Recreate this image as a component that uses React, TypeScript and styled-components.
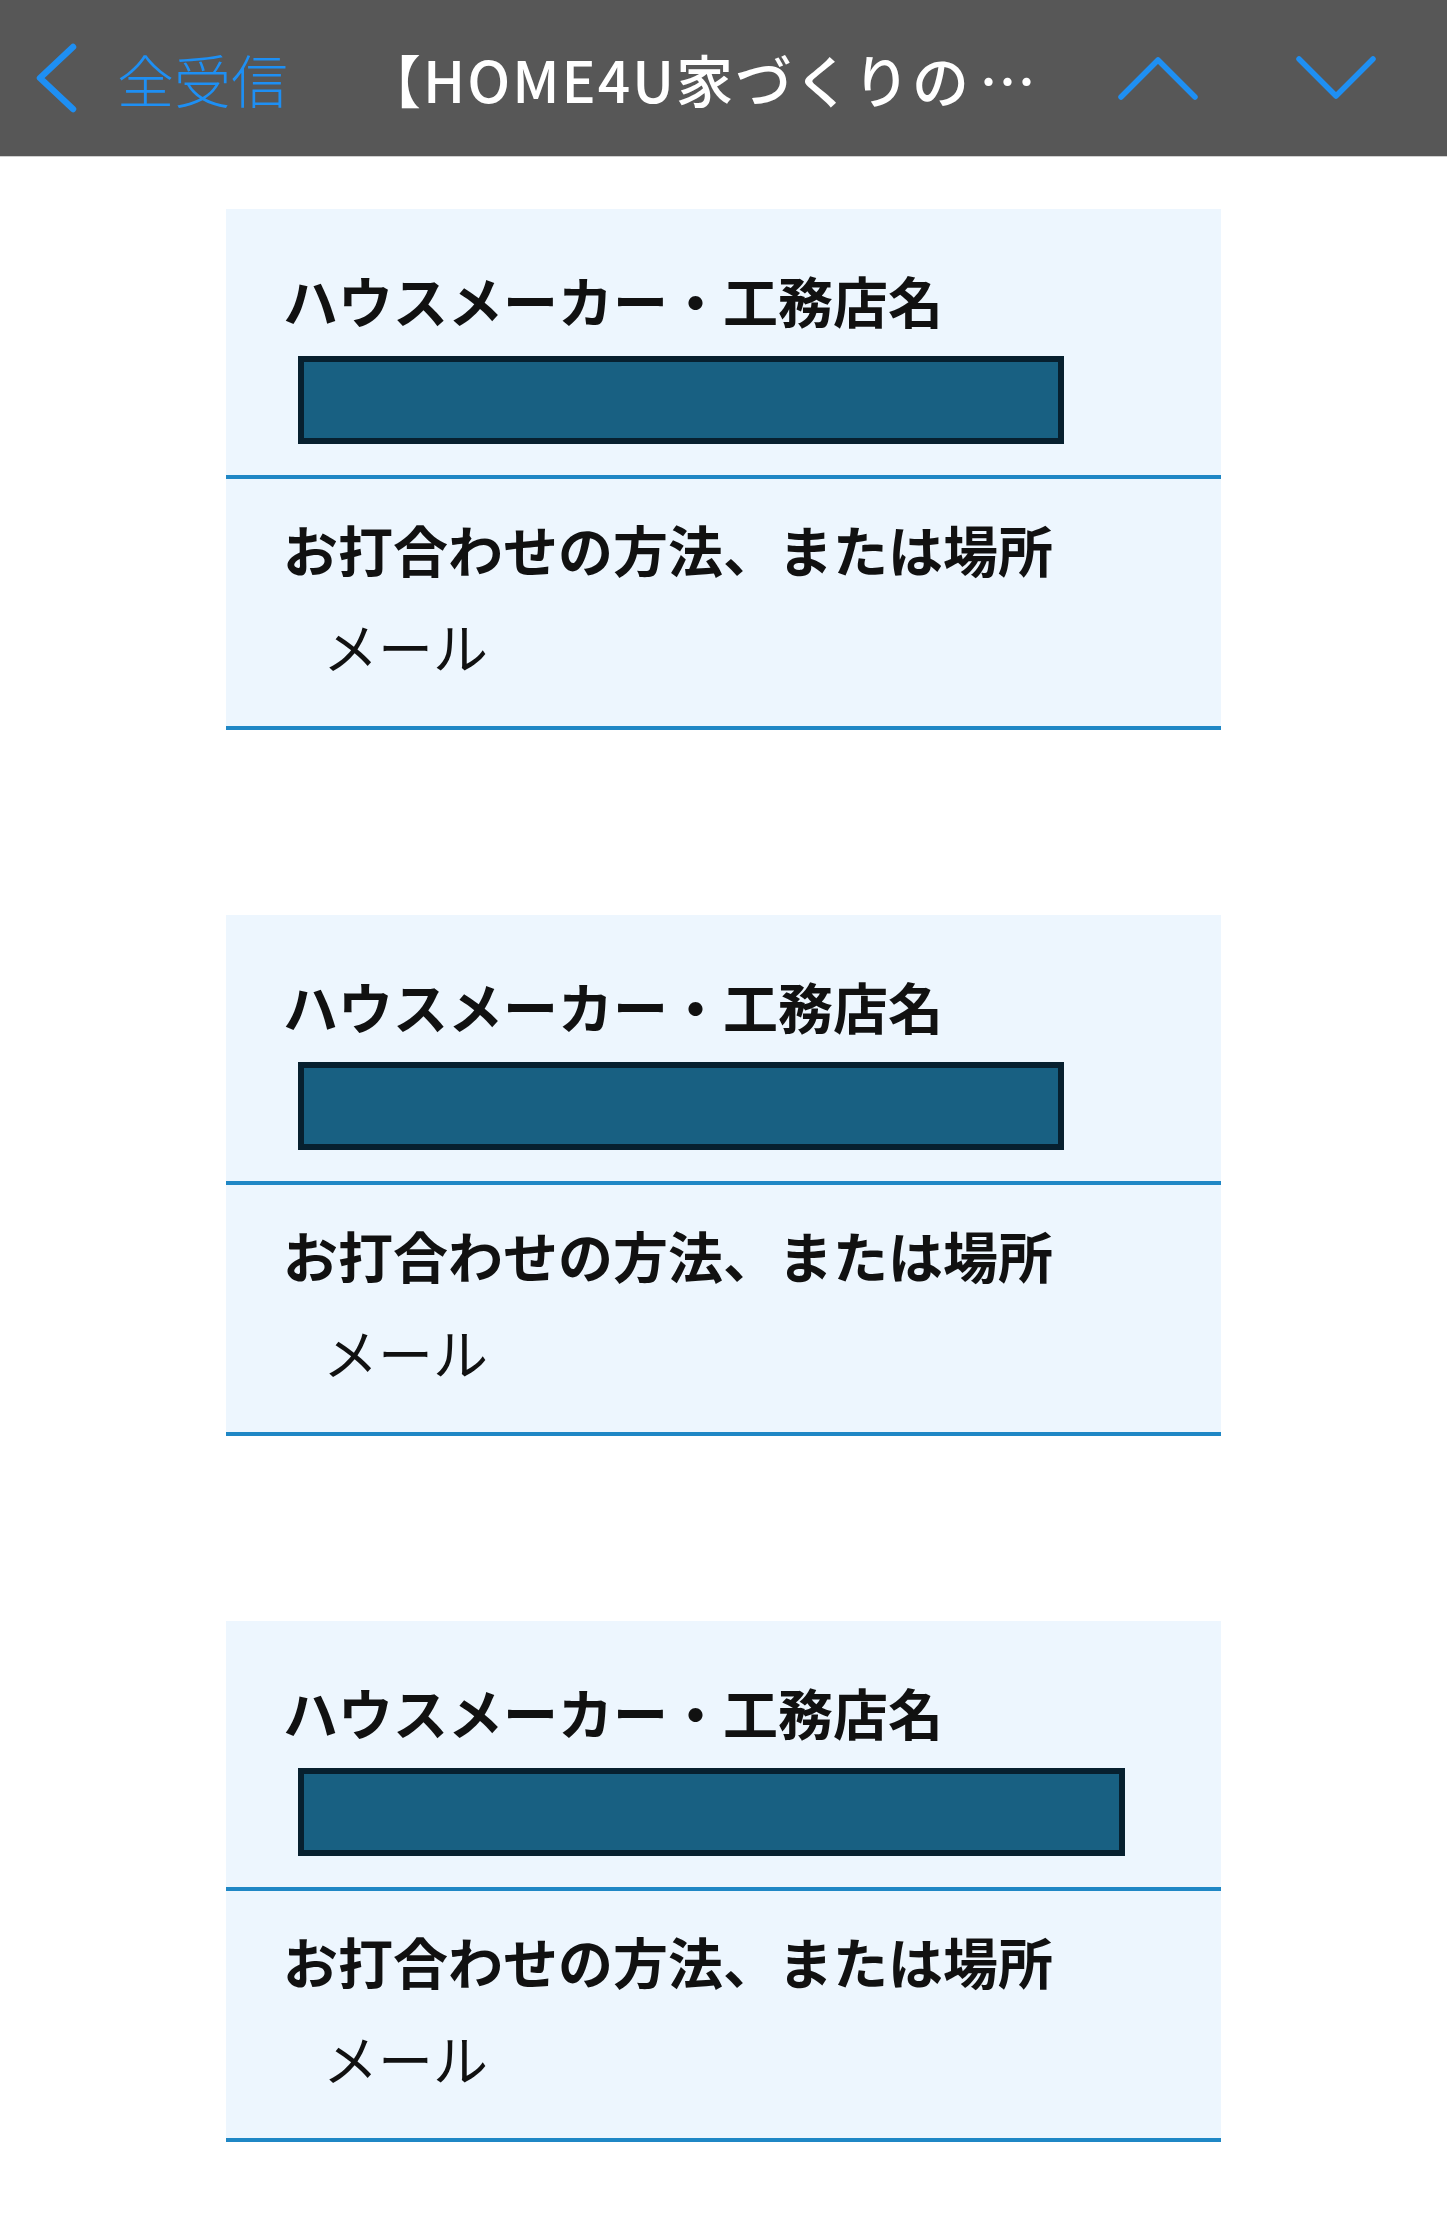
import React from 'react'
import styled, { createGlobalStyle } from 'styled-components'

const GlobalStyle = createGlobalStyle`
  html, body {
    margin: 0;
    padding: 0;
    background: #ffffff;
  }
  body {
    font-family: "Noto Sans CJK JP", "Noto Sans", sans-serif;
    color: #111111;
  }
`

const accent = '#1e8ff3'

const Header = styled.header`
  display: flex;
  align-items: center;
  height: 156px;
  padding: 0 70px 0 35px;
  background: #575757;
  border-bottom: 1px solid #cfcfcf;
`

const BackButton = styled.button`
  display: flex;
  align-items: center;
  gap: 38px;
  padding: 0;
  border: 0;
  background: transparent;
  color: ${accent};
  font-family: inherit;
  font-size: 57px;
  font-weight: 300;
  line-height: 1;
  cursor: pointer;
`

const Title = styled.h1`
  margin: 0 0 0 76px;
  color: #ffffff;
  font-size: 57px;
  font-weight: 500;
  line-height: 1;
  letter-spacing: 2px;
  white-space: nowrap;
`

const Latin = styled.span`
  letter-spacing: 2px;
`

const Ellipsis = styled.span`
  margin-left: 8px;
  letter-spacing: 10px;
`

const NavGroup = styled.div`
  display: flex;
  align-items: center;
  gap: 96px;
  margin-left: auto;
`

const NavButton = styled.button`
  display: flex;
  padding: 0;
  border: 0;
  background: transparent;
  cursor: pointer;
`

const Main = styled.main`
  display: flex;
  flex-direction: column;
  align-items: center;
  gap: 185px;
  padding: 52px 0 80px;
`

const Card = styled.section`
  width: 995px;
  background: #edf6fe;
`

const Field = styled.div<{ $top: number; $bottom: number }>`
  padding: ${(p) => p.$top}px 0 ${(p) => p.$bottom}px 57px;
  border-bottom: 4px solid #1f87c5;
`

const Label = styled.div`
  font-size: 55px;
  font-weight: 700;
  line-height: 70px;
  color: #111111;
`

const Value = styled.div`
  margin-top: 27px;
  padding-left: 40px;
  font-size: 55px;
  font-weight: 400;
  line-height: 70px;
  color: #111111;
`

const Redacted = styled.div<{ $width: number }>`
  width: ${(p) => p.$width}px;
  height: 88px;
  margin: 22px 0 0 15px;
  box-sizing: border-box;
  border: 6px solid #07202f;
  background: #186082;
`

const ChevronLeft = () => (
  <svg width="44" height="70" viewBox="0 0 44 70" fill="none">
    <path d="M38 4 L5 35 L38 66" stroke={accent} strokeWidth="6.5" strokeLinecap="round" strokeLinejoin="round" />
  </svg>
)

const ChevronUp = () => (
  <svg width="82" height="48" viewBox="0 0 82 48" fill="none">
    <path d="M4 43 L41 6 L78 43" stroke={accent} strokeWidth="5.5" strokeLinecap="round" strokeLinejoin="round" />
  </svg>
)

const ChevronDown = () => (
  <svg width="82" height="48" viewBox="0 0 82 48" fill="none">
    <path d="M4 5 L41 42 L78 5" stroke={accent} strokeWidth="5.5" strokeLinecap="round" strokeLinejoin="round" />
  </svg>
)

type Meeting = {
  boxWidth: number
  method: string
}

const meetings: Meeting[] = [
  { boxWidth: 766, method: 'メール' },
  { boxWidth: 766, method: 'メール' },
  { boxWidth: 827, method: 'メール' },
]

const MeetingCard = ({ item }: { item: Meeting }) => (
  <Card>
    <Field $top={55} $bottom={31}>
      <Label>ハウスメーカー・工務店名</Label>
      <Redacted $width={item.boxWidth} />
    </Field>
    <Field $top={34} $bottom={46}>
      <Label>お打合わせの方法、または場所</Label>
      <Value>{item.method}</Value>
    </Field>
  </Card>
)

const App = () => (
  <div lang="ja">
    <GlobalStyle />
    <Header>
      <BackButton>
        <ChevronLeft />
        全受信
      </BackButton>
      <Title>
        【<Latin>HOME4U</Latin>家づくりの<Ellipsis>…</Ellipsis>
      </Title>
      <NavGroup>
        <NavButton>
          <ChevronUp />
        </NavButton>
        <NavButton>
          <ChevronDown />
        </NavButton>
      </NavGroup>
    </Header>
    <Main>
      {meetings.map((m, i) => (
        <MeetingCard key={i} item={m} />
      ))}
    </Main>
  </div>
)

export default App
